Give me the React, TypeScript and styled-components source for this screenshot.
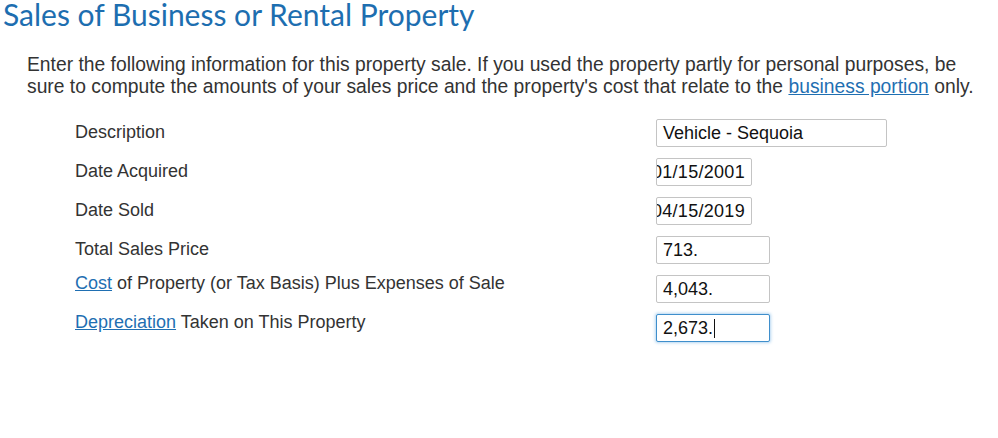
import React from "react";
import styled, { createGlobalStyle } from "styled-components";

const GlobalStyle = createGlobalStyle`
  html, body { margin: 0; padding: 0; background: #ffffff; }
  body { font-family: "Liberation Sans", Arial, sans-serif; color: #333333; }
`;

const Page = styled.div`
  width: 998px;
  height: 438px;
  overflow: hidden;
  background: #ffffff;
`;

const Title = styled.h1`
  margin: 0;
  padding-left: 3px;
  font-family: Lato, "Open Sans", sans-serif;
  font-weight: 400;
  font-size: 30px;
  line-height: 28px;
  color: #1d6eb0;
`;

const Intro = styled.p`
  margin: 26px 20px 0 27px;
  font-size: 19.3px;
  line-height: 22px;
  color: #333333;
`;

const Link = styled.a`
  color: #1f6fb2;
  text-decoration: underline;
  cursor: pointer;
`;

const Form = styled.div`
  display: grid;
  grid-template-columns: 581px auto;
  row-gap: 11px;
  margin: 21px 0 0 75px;
`;

const Label = styled.div<{ $raised?: boolean }>`
  font-size: 18px;
  line-height: 26px;
  color: #333333;
  margin-top: ${(p) => (p.$raised ? "-5px" : "0")};
`;

const Field = styled.div<{ $width: number; $active?: boolean; $clipStart?: boolean }>`
  box-sizing: border-box;
  width: ${(p) => p.$width}px;
  height: 28px;
  display: flex;
  align-items: center;
  justify-content: ${(p) => (p.$clipStart ? "flex-end" : "flex-start")};
  overflow: hidden;
  padding: 0 6px;
  border: 1px solid ${(p) => (p.$active ? "#3f8fcc" : "#c4c4c4")};
  border-radius: 2px;
  box-shadow: ${(p) => (p.$active ? "0 0 3px 1px rgba(90, 165, 225, 0.45)" : "none")};
  background: #ffffff;
  font-size: 18px;
  color: #111111;
  white-space: nowrap;
`;

const Value = styled.span<{ $wide?: boolean }>`
  flex: none;
  line-height: 20px;
  letter-spacing: ${(p) => (p.$wide ? "0.3px" : "0")};
`;

const Caret = styled.span`
  flex: none;
  display: inline-block;
  width: 1px;
  height: 19px;
  margin-left: 1px;
  background: #111111;
`;

type Row = {
  label: React.ReactNode;
  value: string;
  width: number;
  raised?: boolean;
  clipStart?: boolean;
  active?: boolean;
};

const rows: Row[] = [
  { label: "Description", value: "Vehicle - Sequoia", width: 231 },
  { label: "Date Acquired", value: "01/15/2001", width: 96, clipStart: true },
  { label: "Date Sold", value: "04/15/2019", width: 96, clipStart: true },
  { label: "Total Sales Price", value: "713.", width: 114 },
  {
    label: (
      <>
        <Link>Cost</Link> of Property (or Tax Basis) Plus Expenses of Sale
      </>
    ),
    value: "4,043.",
    width: 114,
    raised: true,
  },
  {
    label: (
      <>
        <Link>Depreciation</Link> Taken on This Property
      </>
    ),
    value: "2,673.",
    width: 114,
    raised: true,
    active: true,
  },
];

export default function App() {
  return (
    <Page>
      <GlobalStyle />
      <Title>Sales of Business or Rental Property</Title>
      <Intro>
        Enter the following information for this property sale. If you used the property partly for personal
        purposes, be sure to compute the amounts of your sales price and the property's cost that relate to the{" "}
        <Link>business portion</Link> only.
      </Intro>
      <Form>
        {rows.map((r, i) => (
          <React.Fragment key={i}>
            <Label $raised={r.raised}>{r.label}</Label>
            <Field $width={r.width} $active={r.active} $clipStart={r.clipStart}>
              <Value $wide={r.clipStart}>{r.value}</Value>
              {r.active && <Caret />}
            </Field>
          </React.Fragment>
        ))}
      </Form>
    </Page>
  );
}
